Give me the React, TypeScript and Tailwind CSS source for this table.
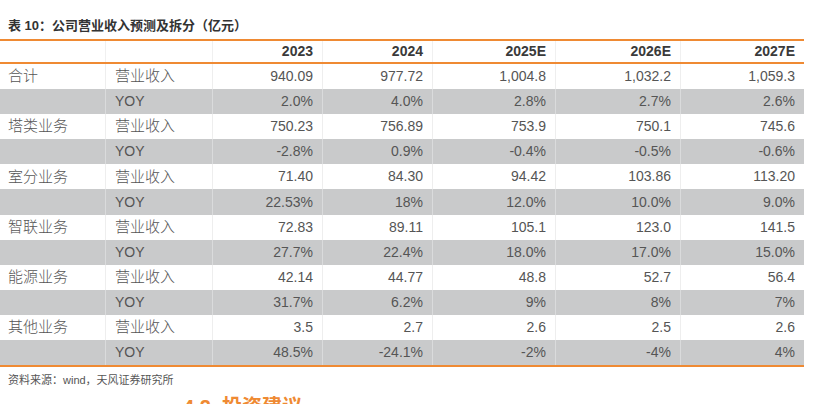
import React from "react";

const cols = "grid grid-cols-[105px_107px_110px_110px_123px_125px_124px]";

const rows: { seg: string; rev: string[]; yoy: string[] }[] = [
  { seg: "合计", rev: ["940.09", "977.72", "1,004.8", "1,032.2", "1,059.3"], yoy: ["2.0%", "4.0%", "2.8%", "2.7%", "2.6%"] },
  { seg: "塔类业务", rev: ["750.23", "756.89", "753.9", "750.1", "745.6"], yoy: ["-2.8%", "0.9%", "-0.4%", "-0.5%", "-0.6%"] },
  { seg: "室分业务", rev: ["71.40", "84.30", "94.42", "103.86", "113.20"], yoy: ["22.53%", "18%", "12.0%", "10.0%", "9.0%"] },
  { seg: "智联业务", rev: ["72.83", "89.11", "105.1", "123.0", "141.5"], yoy: ["27.7%", "22.4%", "18.0%", "17.0%", "15.0%"] },
  { seg: "能源业务", rev: ["42.14", "44.77", "48.8", "52.7", "56.4"], yoy: ["31.7%", "6.2%", "9%", "8%", "7%"] },
  { seg: "其他业务", rev: ["3.5", "2.7", "2.6", "2.5", "2.6"], yoy: ["48.5%", "-24.1%", "-2%", "-4%", "4%"] },
];

const years = ["2023", "2024", "2025E", "2026E", "2027E"];

function Row({ first, second, values, grey }: { first: string; second: string; values: string[]; grey?: boolean }) {
  const line = grey ? "border-l border-[#dadbdc]" : "border-l border-[#eeeeee]";
  return (
    <div className={`${cols} h-[25.1px] items-center text-[14px] font-light text-[#555555] ${grey ? "bg-[#c9cacb]" : "bg-white"}`}>
      <div className="h-full flex items-center pl-2 text-[15px]">{first}</div>
      <div className={`h-full flex items-center pl-[9px] ${second === "YOY" ? "" : "text-[15px]"} ${line}`}>{second}</div>
      {values.map((v, i) => (
        <div key={i} className={`h-full flex items-center justify-end pr-[9px] ${line}`}>
          {v}
        </div>
      ))}
    </div>
  );
}

export default function App() {
  return (
    <div className="w-[815px] h-[404px] overflow-hidden bg-white font-['Liberation_Sans','Noto_Sans_CJK_SC',sans-serif]">
      <div className="pt-[17px] pl-2 text-[13px] leading-[18px] font-bold text-[#333333]">
        表 10：公司营业收入预测及拆分（亿元）
      </div>

      <div className="mt-[4px] w-[804px] border-t-2 border-b-2 border-[#ef8a33]">
        <div className={`${cols} h-[23px] items-center border-b-2 border-[#ef8a33] text-[14px] font-bold text-[#3a3a3a]`}>
          <div className="h-full" />
          <div className="h-full border-l border-[#f0f0f0]" />
          {years.map((y) => (
            <div key={y} className="h-full flex items-center justify-end pr-[9px] border-l border-[#f0f0f0]">
              {y}
            </div>
          ))}
        </div>
        {rows.map((r) => (
          <React.Fragment key={r.seg}>
            <Row first={r.seg} second="营业收入" values={r.rev} />
            <Row first="" second="YOY" values={r.yoy} grey />
          </React.Fragment>
        ))}
      </div>

      <div className="mt-[6px] pl-2 text-[11px] leading-[14px] text-[#555555]">
        资料来源：wind，天风证券研究所
      </div>

      <div className="mt-[8px] pl-[183px] text-[20px] leading-[24px] font-bold text-[#ef8a33]">
        4.2. 投资建议
      </div>
    </div>
  );
}
